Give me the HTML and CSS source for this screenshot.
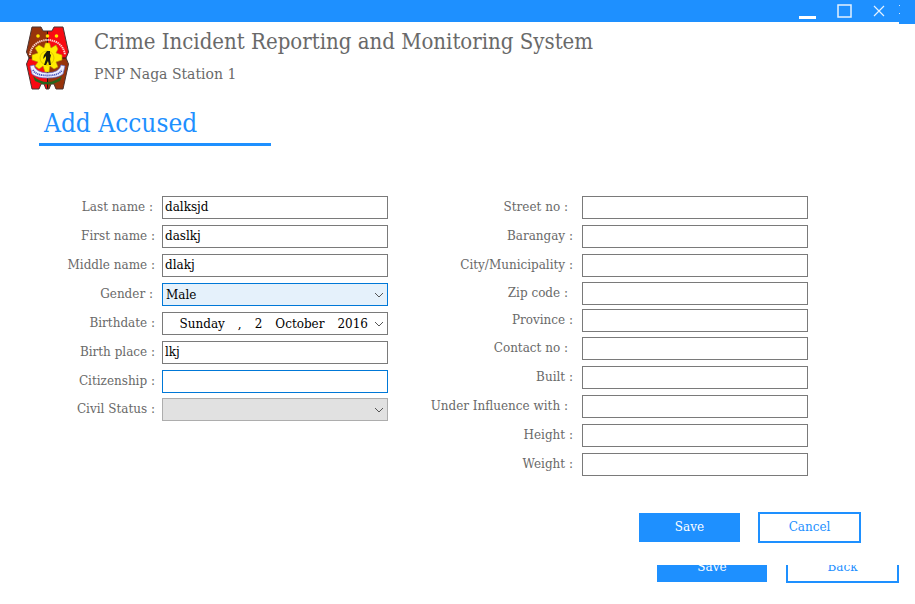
FILE: index.html
```html
<!DOCTYPE html>
<html lang="en">
<head>
<meta charset="utf-8">
<title>Crime Incident Reporting and Monitoring System</title>
<link rel="stylesheet" href="styles.css">
</head>
<body>
<div class="titlebar">
  <div class="window-controls">
    <button class="window-button" type="button" aria-label="Minimize"><svg width="17" height="18" viewBox="0 0 17 18"><path d="M0 15.500H17" stroke="#fff" stroke-width="3"/></svg></button>
    <button class="window-button" type="button" aria-label="Maximize"><svg width="15" height="18" viewBox="0 0 15 18"><rect x="1" y="3" width="13" height="12" fill="none" stroke="#e4f1ff" stroke-width="1.500"/></svg></button>
    <button class="window-button" type="button" aria-label="Close"><svg width="12" height="18" viewBox="0 0 12 18"><path d="M1 4L11 14M11 4L1 14" stroke="#e4f1ff" stroke-width="1.200"/></svg></button>
  </div>
  <div class="titlebar-edge"><svg width="2" height="16" viewBox="0 0 2 16"><path d="M0 5.500H1M0 13.500H1" stroke="#d5e9ff"/></svg></div>
</div>

<header class="header">
  <svg class="badge" width="43" height="64" viewBox="0 0 43 64" role="img" aria-label="Police badge">
    <defs>
      <clipPath id="shield"><path d="M6 1H15L17 5H26L28 1H37L42.500 26L40 32L42.500 38L37 63H30L28 58H25L23 63H20L18 58H15L13 63H6L.5 38L3 32L.5 26Z"/></clipPath>
      <path id="arc" d="M4 29C6 9 37 9 39 29"/>
    </defs>
    <g clip-path="url(#shield)">
      <path fill="#97330b" d="M0 0H21.500V32H0ZM21.500 32H43V64H21.500Z"/>
      <path fill="#f80a12" d="M21.500 0H43V32H21.500ZM0 32H21.500V64H0Z"/>
      <path d="M21.500 0V64M0 32H43" stroke="#24120d" stroke-width="1"/>
    </g>
    <path d="M6 1H15L17 5H26L28 1H37L42.500 26L40 32L42.500 38L37 63H30L28 58H25L23 63H20L18 58H15L13 63H6L.5 38L3 32L.5 26Z" fill="none" stroke="#493331"/>
    <g fill="#ffe500"><circle cx="12" cy="10" r="1.800"/><circle cx="21.500" cy="10" r="1.800"/><circle cx="30.500" cy="10" r="1.800"/></g>
    <use href="#arc" fill="none" stroke="#f9d4cf" stroke-width="2" stroke-dasharray="1.400 .7"/>
    <path d="M7 50Q21.500 62 36 50L34 55Q21.500 62 9 55Z" fill="#27631b"/>
    <path d="M19.500 17H23.500L25 22L30 19L32 23L30 27L36 29V34L30 36L32 41L28 43L24 40L23 46H19L17 40L13 43L9 40L12 36L6 34V29L12 27L9 22L13 19L18 22Z" fill="#ffed00" stroke="#b59308" stroke-width=".6"/>
    <circle cx="21" cy="32" r="7" fill="#ffed00" stroke="#ba9e00" stroke-width=".5"/>
    <path d="M21 25H24V28L25 29L24 33L25 39H23L22 35L20 39H18L20 33V30L17 33L18 29Z" fill="#171a0e"/>
    <path d="M4 40L8 39Q9 46 21.500 47Q34 46 35 39L39 40L37 48Q32 52 21.500 52Q11 52 6 48Z" fill="#eef0ff" stroke="#646ac6" stroke-width=".7"/>
    <path d="M7 44Q10 49.500 21.500 49.500Q33 49.500 36 44" fill="none" stroke="#4651ba" stroke-width="1.800" stroke-dasharray="1.200 .7"/>
  </svg>
  <div class="brand">
    <h1 class="app-name">Crime Incident Reporting and Monitoring System</h1>
    <p class="station">PNP Naga Station 1</p>
  </div>
</header>

<main>
  <h2 class="page-title">Add Accused</h2>
  <form>
    <div class="columns">
      <div class="personal">
        <div class="field"><label class="label label-spaced" for="last">Last name :</label><input class="control" id="last" type="text" value="dalksjd"></div>
        <div class="field"><label class="label" for="first">First name :</label><input class="control" id="first" type="text" value="daslkj"></div>
        <div class="field"><label class="label" for="middle">Middle name :</label><input class="control" id="middle" type="text" value="dlakj"></div>
        <div class="field"><label class="label label-spaced" for="gender">Gender :</label>
          <div class="picker"><select class="control active" id="gender"><option>Male</option><option>Female</option></select><svg class="chevron" width="10" height="6" viewBox="0 0 10 6"><path d="M1 1L5 5L9 1"/></svg></div></div>
        <div class="field"><label class="label" for="birthdate">Birthdate :</label>
          <div class="picker"><button class="control date" id="birthdate" type="button"><span>Sunday</span><span>,</span><span>2</span><span>October</span><span>2016</span></button><svg class="chevron" width="10" height="6" viewBox="0 0 10 6"><path d="M1 1L5 5L9 1"/></svg></div></div>
        <div class="field"><label class="label" for="birthplace">Birth place :</label><input class="control" id="birthplace" type="text" value="lkj"></div>
        <div class="field snug"><label class="label" for="citizenship">Citizenship :</label><input class="control focused" id="citizenship" type="text"></div>
        <div class="field"><label class="label" for="civil">Civil Status :</label>
          <div class="picker"><select class="control muted" id="civil"><option></option><option>Single</option><option>Married</option></select><svg class="chevron" width="10" height="6" viewBox="0 0 10 6"><path d="M1 1L5 5L9 1"/></svg></div></div>
      </div>
      <div class="details">
        <div class="field"><label class="label label-spaced" for="street">Street no :</label><input class="control" id="street" type="text"></div>
        <div class="field"><label class="label" for="barangay">Barangay :</label><input class="control" id="barangay" type="text"></div>
        <div class="field snug"><label class="label" for="city">City/Municipality :</label><input class="control" id="city" type="text"></div>
        <div class="field tight"><label class="label label-spaced" for="zip">Zip code :</label><input class="control" id="zip" type="text"></div>
        <div class="field snug"><label class="label" for="province">Province :</label><input class="control" id="province" type="text"></div>
        <div class="field"><label class="label label-spaced" for="contact">Contact no :</label><input class="control" id="contact" type="text"></div>
        <div class="field"><label class="label" for="built">Built :</label><input class="control" id="built" type="text"></div>
        <div class="field"><label class="label label-spaced" for="influence">Under Influence with :</label><input class="control" id="influence" type="text"></div>
        <div class="field"><label class="label" for="height">Height :</label><input class="control" id="height" type="text"></div>
        <div class="field"><label class="label" for="weight">Weight :</label><input class="control" id="weight" type="text"></div>
      </div>
    </div>
    <div class="actions">
      <button class="button primary" type="submit">Save</button>
      <button class="button outline" type="button">Cancel</button>
    </div>
  </form>
</main>

<footer class="underlay">
  <div class="underlay-actions">
    <button class="button primary" type="button">Save</button>
    <button class="button outline" type="button">Back</button>
  </div>
</footer>
</body>
</html>
```
FILE: styles.css
```css
* { box-sizing: border-box; }

body {
  margin: 0;
  background: #fff;
  color: #696969;
  font: 12px/20px "DejaVu Serif", serif;
}

button, input, select { font: inherit; }

.titlebar {
  display: flex;
  justify-content: flex-end;
  height: 22px;
  background: #1e90ff;
}

.window-controls {
  display: flex;
  align-items: flex-start;
  gap: 21px;
  padding-top: 2px;
  margin-right: 14px;
}

.window-button {
  display: block;
  padding: 0;
  border: 0;
  background: none;
}

.window-button svg { display: block; }

.titlebar-edge {
  width: 16px;
  height: 24px;
  background: #1e90ff;
}

.header {
  display: flex;
  gap: 25px;
  padding: 4px 26px 0;
}

.badge { flex: none; }

.app-name {
  margin: 0;
  font-family: "DejaVu Serif Condensed", "DejaVu Serif", serif;
  font-size: 22px;
  line-height: 32px;
  font-weight: 400;
}

.station {
  margin: 0;
  font-size: 14px;
  line-height: 32px;
}

.page-title {
  width: fit-content;
  min-width: 232px;
  margin: 14px 39px 50px;
  padding: 0 5px;
  border-bottom: 3px solid #1e90ff;
  color: #1e90ff;
  font-family: "DejaVu Serif Condensed", "DejaVu Serif", serif;
  font-size: 26px;
  line-height: 39px;
  font-weight: 400;
}

.columns {
  display: grid;
  grid-template-columns: 388fr 420fr 107fr;
}

.field {
  display: grid;
  align-items: start;
  margin-bottom: 6px;
}

.personal .field { grid-template-columns: 162fr 226fr; }
.details .field { grid-template-columns: 194fr 226fr; }
.field.snug { margin-bottom: 5px; }
.field.tight { margin-bottom: 4px; }

.label {
  padding-top: 1px;
  padding-right: 7px;
  text-align: right;
  white-space: nowrap;
}

.label-spaced { padding-right: 9px; }
.details .label { padding-right: 9px; }
.details .label-spaced { padding-right: 14px; }

.control {
  display: block;
  width: 100%;
  min-width: 0;
  height: 23px;
  padding: 0 2px 2px;
  border: 1px solid #7a7a7a;
  border-radius: 0;
  outline: 0;
  background: #fff;
  color: #000;
  appearance: none;
}

.picker { position: relative; }
.picker .control { padding: 0 3px; }
.control.active { border-color: #0078d7; background: #e5f1fb; }
.control.focused { border-color: #0078d7; }
.control.muted { border-color: #adadad; background: #e1e1e1; }

.picker .date {
  display: flex;
  align-items: center;
  justify-content: flex-end;
  gap: 13px;
  padding-right: 19px;
}

.chevron {
  position: absolute;
  top: 9px;
  right: 4px;
  fill: none;
  stroke: #555;
  pointer-events: none;
}

.actions, .underlay-actions {
  display: flex;
  align-items: center;
  justify-content: flex-end;
}

.actions {
  gap: 18px;
  padding: 30px 54px 22px 0;
}

.button {
  min-width: 101px;
  height: 29px;
  padding: 0 8px 2px;
  border: 0;
  background: #1e90ff;
  color: #fff;
}

.button.outline {
  min-width: 103px;
  height: 31px;
  border: 2px solid #1e90ff;
  background: #fff;
  color: #1e90ff;
}

.underlay {
  display: flex;
  align-items: flex-end;
  justify-content: flex-end;
  height: 18px;
  padding-right: 16px;
  overflow: hidden;
}

.underlay-actions { gap: 19px; }
.underlay .primary { min-width: 110px; }
.underlay .outline { min-width: 113px; }
```
